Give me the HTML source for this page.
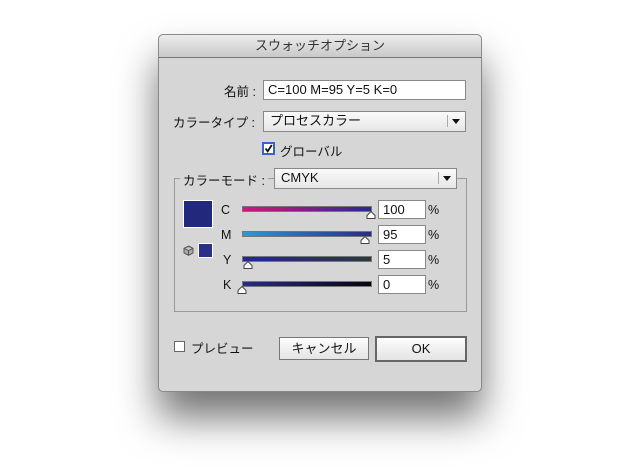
<!DOCTYPE html>
<html><head><meta charset="utf-8"><style>
body{margin:0;width:640px;height:471px;background:#fff;position:relative;overflow:hidden;font-family:"Liberation Sans","Noto Sans CJK JP",sans-serif;font-size:12.5px;color:#111}
.a{position:absolute}
#dlg{left:158px;top:34px;width:324px;height:358px;background:#d6d6d6;border:1px solid #8a8a8a;box-sizing:border-box;border-radius:5px;box-shadow:0 26px 40px rgba(0,0,0,0.55)}
#tb{left:0;top:0;width:322px;height:22px;background:linear-gradient(#ececec,#c9c9c9);border-bottom:1px solid #777;border-radius:5px 5px 0 0;text-align:center;line-height:22px;font-size:13px;color:#333}
.in{background:#fff;border:1px solid #888;box-sizing:border-box;line-height:17px;padding-left:4px;font-size:13px}
.dd{background:linear-gradient(#fafafa,#e6e6e6);border:1px solid #888;box-sizing:border-box;line-height:18px;padding-left:6px;font-size:13px}
.dd:after{content:"";position:absolute;right:17px;top:3px;height:12px;border-left:1px solid #aaa}
.arr{position:absolute;right:5px;top:7px;border-left:4px solid transparent;border-right:4px solid transparent;border-top:5px solid #111}
.bar{height:6px;border:1px solid #777;box-sizing:border-box}
.btn{background:linear-gradient(#fdfdfd,#e4e4e4);border:1px solid #777;box-sizing:border-box;text-align:center;font-size:13px}
</style></head><body>
<div id="dlg" class="a">
<div id="tb" class="a">スウォッチオプション</div>
</div>
<div class="a" style="left:224px;top:81px">名前 :</div>
<div class="a in" style="left:263px;top:80px;width:203px;height:20px">C=100 M=95 Y=5 K=0</div>
<div class="a" style="left:173px;top:112px">カラータイプ :</div>
<div class="a dd" style="left:263px;top:111px;width:203px;height:21px">プロセスカラー<span class="arr"></span></div>
<svg class="a" style="left:262px;top:142px" width="13" height="13" viewBox="0 0 13 13"><rect x="1" y="1" width="11" height="11" fill="#fff" stroke="#3a5fd0" stroke-width="2"/><path d="M3.5 6.5L5.7 9.3 9.8 3" fill="none" stroke="#111" stroke-width="1.8"/></svg>
<div class="a" style="left:280px;top:141px">グローバル</div>
<div class="a" style="left:174px;top:178px;width:293px;height:134px;border:1px solid #999;box-sizing:border-box"></div>
<div class="a" style="left:180px;top:170px;background:#d6d6d6;padding:0 3px">カラーモード :</div>
<div class="a dd" style="left:274px;top:168px;width:183px;height:21px">CMYK<span class="arr"></span></div>
<div class="a" style="left:183px;top:200px;width:30px;height:28px;background:#22287c;border:1px solid #fff;box-sizing:border-box"></div>
<div class="a" style="left:198px;top:243px;width:15px;height:15px;background:#2a2f88;border:1px solid #fff;box-sizing:border-box"></div>
<svg class="a" style="left:183px;top:245px" width="11" height="11" viewBox="0 0 11 11"><path d="M5.5 1L10 3.3V8L5.5 10.3 1 8V3.3Z M1 3.3L5.5 5.6 10 3.3 M5.5 5.6V10.3" fill="#aaa" stroke="#555" stroke-width="1"/></svg>
<div class="a" style="left:221px;top:203px">C</div>
<div class="a" style="left:221px;top:228px">M</div>
<div class="a" style="left:223px;top:253px">Y</div>
<div class="a" style="left:223px;top:278px">K</div>
<div class="a bar" style="left:242px;top:206px;width:130px;background:linear-gradient(90deg,#d4147e,#2a2a8a)"></div>
<div class="a bar" style="left:242px;top:231px;width:130px;background:linear-gradient(90deg,#2a9ad8,#2a2a8a)"></div>
<div class="a bar" style="left:242px;top:256px;width:130px;background:linear-gradient(90deg,#2424a0,#2a3a3a)"></div>
<div class="a bar" style="left:242px;top:281px;width:130px;background:linear-gradient(90deg,#2a2a8a,#050510)"></div>
<svg class="a" style="left:366px;top:211px" width="10" height="8"><path d="M1 7.5V4.5L5 .5 9 4.5V7.5Z" fill="#fff" stroke="#444"/></svg>
<svg class="a" style="left:360px;top:236px" width="10" height="8"><path d="M1 7.5V4.5L5 .5 9 4.5V7.5Z" fill="#fff" stroke="#444"/></svg>
<svg class="a" style="left:243px;top:261px" width="10" height="8"><path d="M1 7.5V4.5L5 .5 9 4.5V7.5Z" fill="#fff" stroke="#444"/></svg>
<svg class="a" style="left:237px;top:286px" width="10" height="8"><path d="M1 7.5V4.5L5 .5 9 4.5V7.5Z" fill="#fff" stroke="#444"/></svg>
<div class="a in" style="left:378px;top:200px;width:48px;height:19px">100</div>
<div class="a in" style="left:378px;top:225px;width:48px;height:19px">95</div>
<div class="a in" style="left:378px;top:250px;width:48px;height:19px">5</div>
<div class="a in" style="left:378px;top:275px;width:48px;height:19px">0</div>
<div class="a" style="left:428px;top:203px">%</div>
<div class="a" style="left:428px;top:228px">%</div>
<div class="a" style="left:428px;top:253px">%</div>
<div class="a" style="left:428px;top:278px">%</div>
<div class="a" style="left:174px;top:341px;width:11px;height:11px;border:1px solid #666;box-sizing:border-box;background:#fff"></div>
<div class="a" style="left:191px;top:338px">プレビュー</div>
<div class="a btn" style="left:279px;top:337px;width:90px;height:23px;line-height:21px">キャンセル</div>
<div class="a btn" style="left:375px;top:336px;width:92px;height:26px;line-height:22px;border:2px solid #666">OK</div>
</body></html>
